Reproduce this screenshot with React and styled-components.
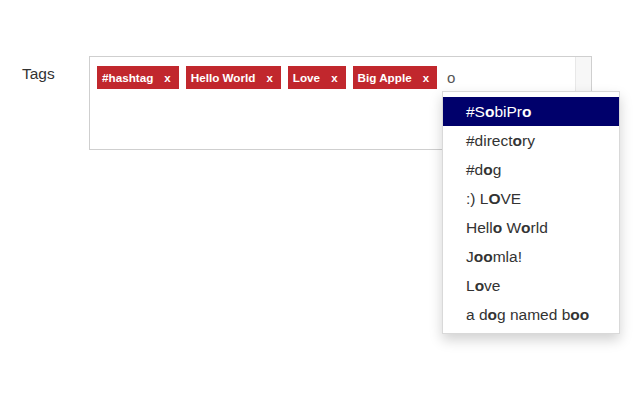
import React from "react";
import styled, { createGlobalStyle } from "styled-components";

const Global = createGlobalStyle`
  html, body { margin: 0; padding: 0; background: #fff; }
  body { font-family: "Liberation Sans", Arial, sans-serif; color: #333; }
`;

const Page = styled.div`
  width: 636px;
  height: 394px;
  padding-top: 56px;
  box-sizing: border-box;
`;

const Row = styled.div`
  display: flex;
  align-items: flex-start;
`;

const Label = styled.label`
  width: 67px;
  margin-left: 22px;
  padding-top: 9px;
  font-size: 15.5px;
  color: #333;
`;

const Field = styled.div`
  position: relative;
  display: flex;
  width: 503px;
  height: 94px;
  box-sizing: border-box;
  border: 1px solid #cfcfcf;
  background: #fff;
`;

const TagArea = styled.div`
  flex: 1;
  display: flex;
  flex-wrap: wrap;
  align-content: flex-start;
  align-items: center;
  gap: 7px;
  padding: 9px 7px;
`;

const ScrollTrack = styled.div`
  width: 15px;
  background: #f7f7f7;
  border-left: 1px solid #e8e8e8;
`;

const Tag = styled.span`
  display: inline-flex;
  align-items: center;
  height: 23px;
  padding: 0 8px 0 5px;
  background: #c1272d;
  color: #fff;
  font-size: 11.7px;
  font-weight: bold;
`;

const Remove = styled.span`
  margin-left: 11px;
  font-size: 11.5px;
  font-weight: bold;
`;

const Typed = styled.span`
  margin-left: 3px;
  font-size: 15px;
  color: #555;
  line-height: 23px;
`;

const Menu = styled.ul`
  position: absolute;
  left: 352px;
  top: 34px;
  width: 176px;
  margin: 0;
  padding: 5px 0 4px;
  list-style: none;
  background: #fff;
  border: 1px solid rgba(0, 0, 0, 0.15);
  box-shadow: 0 6px 12px rgba(0, 0, 0, 0.18);
  z-index: 2;
`;

const Item = styled.li`
  height: 29px;
  line-height: 29px;
  padding-left: 23px;
  font-size: 15.5px;
  white-space: nowrap;
  color: ${(p) => (p.$active ? "#fff" : "#333")};
  background: ${(p) => (p.$active ? "#00006b" : "transparent")};
  b { font-weight: bold; }
`;

const tags = ["#hashtag", "Hello World", "Love", "Big Apple"];

const suggestions = [
  ["#S", "o", "biPr", "o"],
  ["#direct", "o", "ry"],
  ["#d", "o", "g"],
  [":) L", "O", "VE"],
  ["Hell", "o", " W", "o", "rld"],
  ["J", "oo", "mla!"],
  ["L", "o", "ve"],
  ["a d", "o", "g named b", "oo"],
];

export default function App() {
  return (
    <Page>
      <Global />
      <Row>
        <Label>Tags</Label>
        <Field>
          <TagArea>
            {tags.map((t) => (
              <Tag key={t}>
                {t}
                <Remove>x</Remove>
              </Tag>
            ))}
            <Typed>o</Typed>
          </TagArea>
          <ScrollTrack />
          <Menu>
            {suggestions.map((parts, i) => (
              <Item key={i} $active={i === 0}>
                {parts.map((p, j) => (j % 2 === 1 ? <b key={j}>{p}</b> : <span key={j}>{p}</span>))}
              </Item>
            ))}
          </Menu>
        </Field>
      </Row>
    </Page>
  );
}
